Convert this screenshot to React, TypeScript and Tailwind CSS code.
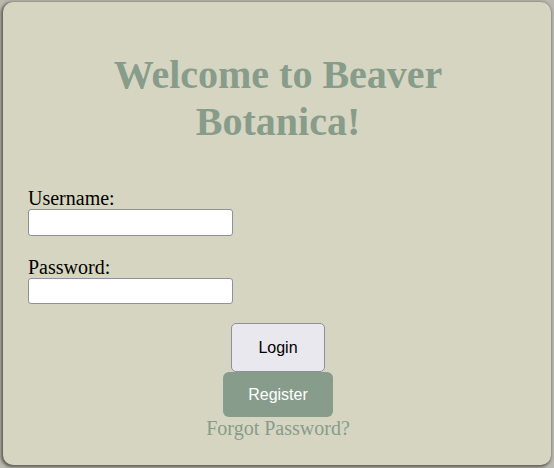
import React, { useState } from "react";

export default function App() {
  const [username, setUsername] = useState("");
  const [password, setPassword] = useState("");

  return (
    <div className="h-[468px] w-[554px] bg-[#b9b9b0] pt-[2px] pl-[3px] pr-[3px] pb-[3px]">
      <div
        className="h-full rounded-[10px] bg-[#d6d5c1] px-[25px] pt-[49px] shadow-[-1px_1px_3px_1px_rgba(90,90,80,0.95)]"
        style={{ fontFamily: '"Liberation Serif", serif' }}
      >
        {/* Title */}
        <h1 className="ml-[2px] text-center text-[40px] leading-[47px] font-bold text-[#879c8b]">
          Welcome to Beaver
          <br />
          Botanica!
        </h1>

        {/* Form */}
        <form className="mt-[42px]" onSubmit={(e) => e.preventDefault()}>
          <label className="block text-[20px] leading-[22px] text-black">Username:</label>
          <input
            type="text"
            value={username}
            onChange={(e) => setUsername(e.target.value)}
            className="block h-[27px] w-[205px] rounded-[3px] border border-[#8f8f9d] bg-white px-1"
          />

          <label className="mt-[20px] block text-[20px] leading-[22px] text-black">Password:</label>
          <input
            type="password"
            value={password}
            onChange={(e) => setPassword(e.target.value)}
            className="block h-[26px] w-[205px] rounded-[3px] border border-[#8f8f9d] bg-white px-1"
          />

          <div className="mt-[19px] ml-[2px] flex flex-col items-center">
            <button
              type="submit"
              className="h-[49px] w-[94px] rounded-[5px] border border-[#8f8f9d] bg-[#e9e8ef] text-[16px] text-black"
              style={{ fontFamily: '"Liberation Sans", Arial, sans-serif' }}
            >
              Login
            </button>
            <button
              type="button"
              className="h-[45px] w-[110px] rounded-[6px] bg-[#879c8b] text-[16px] text-white"
              style={{ fontFamily: '"Liberation Sans", Arial, sans-serif' }}
            >
              Register
            </button>
            <a href="#" className="text-[20px] leading-[23px] text-[#879c8b]">
              Forgot Password?
            </a>
          </div>
        </form>
      </div>
    </div>
  );
}
